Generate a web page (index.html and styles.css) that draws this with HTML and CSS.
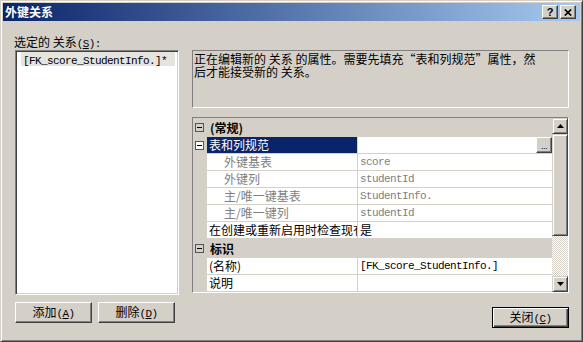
FILE: index.html
```html
<!DOCTYPE html>
<html>
<head>
<meta charset="utf-8">
<link rel="stylesheet" href="styles.css">
</head>
<body>
<div class="window">
  <div class="titlebar">
    <span class="title">外键关系</span>
    <div class="tbtns">
      <span class="tbtn help">?</span>
      <span class="tbtn close"><svg width="8" height="7" viewBox="0 0 8 7"><path d="M0.8 0.5L7.2 6.5M7.2 0.5L0.8 6.5" stroke="#000" stroke-width="1.7"/></svg></span>
    </div>
  </div>
  <div class="body">
    <div class="left">
      <div class="label">选定的 关系<span class="m">(<u>S</u>):</span></div>
      <div class="list">
        <div class="item"><span class="m">[FK_score_StudentInfo.]*</span></div>
      </div>
      <div class="btnrow">
        <button class="btn">添加<span class="m">(<u>A</u>)</span></button>
        <button class="btn">删除<span class="m">(<u>D</u>)</span></button>
      </div>
    </div>
    <div class="right">
      <div class="desc">正在编辑新的 关系 的属性。需要先填充“表和列规范”属性，然<br>后才能接受新的 关系。</div>
      <div class="grid">
        <div class="rows">
          <div class="row cat"><span class="gutter"><span class="box"></span></span><span class="cname">(常规)</span></div>
          <div class="row prop"><span class="gutter"><span class="box"></span></span><span class="name sel">表和列规范</span><span class="value"><span class="vtext"></span><span class="ell">...</span></span></div>
          <div class="row prop"><span class="gutter"></span><span class="name sub">外键基表</span><span class="value dim"><span class="m">score</span></span></div>
          <div class="row prop"><span class="gutter"></span><span class="name sub">外键列</span><span class="value dim"><span class="m">studentId</span></span></div>
          <div class="row prop"><span class="gutter"></span><span class="name sub">主/唯一键基表</span><span class="value dim"><span class="m">StudentInfo.</span></span></div>
          <div class="row prop"><span class="gutter"></span><span class="name sub">主/唯一键列</span><span class="value dim"><span class="m">studentId</span></span></div>
          <div class="row prop"><span class="gutter"></span><span class="name">在创建或重新启用时检查现有数据</span><span class="value">是</span></div>
          <div class="row cat"><span class="gutter"><span class="box"></span></span><span class="cname">标识</span></div>
          <div class="row prop"><span class="gutter"></span><span class="name">(名称)</span><span class="value"><span class="m">[FK_score_StudentInfo.]</span></span></div>
          <div class="row prop"><span class="gutter"></span><span class="name">说明</span><span class="value"></span></div>
        </div>
        <div class="vscroll">
          <div class="sbtn"><svg width="7" height="4" viewBox="0 0 7 4"><path d="M3.5 0L7 4H0z" fill="#000"/></svg></div>
          <div class="thumb"></div>
          <div class="track"></div>
          <div class="sbtn"><svg width="7" height="4" viewBox="0 0 7 4"><path d="M0 0H7L3.5 4z" fill="#000"/></svg></div>
        </div>
      </div>
      <div class="footer">
        <button class="btn default">关闭<span class="m">(<u>C</u>)</span></button>
      </div>
    </div>
  </div>
</div>
</body>
</html>
```
FILE: styles.css
```css
html, body {
  margin: 0;
  padding: 0;
  background: #d4d0c8;
}
body {
  font-family: "Noto Sans CJK SC", "DejaVu Sans", sans-serif;
  font-size: 12px;
  color: #000;
}
.m {
  font-family: "Liberation Mono", "Noto Sans CJK SC", monospace;
  font-size: 11px;
  letter-spacing: -0.6px;
}
.window {
  width: 583px;
  height: 342px;
  box-sizing: border-box;
  background: #d4d0c8;
  border: 1px solid;
  border-color: #d4d0c8 #404040 #404040 #d4d0c8;
  box-shadow: inset 1px 1px #fff, inset -1px -1px #808080;
  padding: 2px;
  display: flex;
  flex-direction: column;
}
.titlebar {
  height: 18px;
  flex: none;
  display: flex;
  align-items: center;
  padding: 0 4px 0 2px;
  background: linear-gradient(to right, #0a246a, #a6caf0);
}
.title {
  color: #fff;
  font-weight: bold;
  font-size: 12px;
  line-height: 18px;
}
.tbtns {
  margin-left: auto;
  display: flex;
  gap: 2px;
}
.tbtn {
  width: 16px;
  height: 14px;
  box-sizing: border-box;
  background: #d4d0c8;
  border: 1px solid;
  border-color: #fff #404040 #404040 #fff;
  box-shadow: inset -1px -1px #808080;
  display: flex;
  align-items: center;
  justify-content: center;
}
.tbtn.help {
  font-family: "Liberation Sans", sans-serif;
  font-weight: bold;
  font-size: 11px;
  line-height: 12px;
}
.body {
  display: flex;
  gap: 13px;
  padding: 12px 11px 0 12px;
}
.left {
  width: 164px;
  flex: none;
  display: flex;
  flex-direction: column;
}
.label {
  height: 17px;
  line-height: 17px;
  margin-left: -1px;
}
.list {
  height: 245px;
  box-sizing: border-box;
  background: #fff;
  border: 1px solid;
  border-color: #808080 #fff #fff #808080;
  box-shadow: inset 1px 1px #404040, inset -1px -1px #d4d0c8;
  padding: 1px 3px 0 5px;
}
.item {
  height: 14px;
  line-height: 14px;
  padding-left: 2px;
  background: #e6e4de;
}
.btnrow {
  display: flex;
  margin-top: 7px;
  gap: 6px;
}
.btn {
  width: 77px;
  height: 21px;
  box-sizing: border-box;
  padding: 0;
  background: #d4d0c8;
  border: 1px solid;
  border-color: #fff #404040 #404040 #fff;
  box-shadow: inset -1px -1px #808080;
  font-family: "Noto Sans CJK SC", sans-serif;
  font-size: 12px;
  color: #000;
  line-height: 17px;
}
.btn.default {
  border-color: #000;
  box-shadow: inset 1px 1px #fff, inset -1px -1px #404040, inset -2px -2px #808080;
}
.right {
  flex: 1;
  display: flex;
  flex-direction: column;
  padding-top: 17px;
}
.desc {
  height: 58px;
  box-sizing: border-box;
  border: 1px solid;
  border-color: #808080 #fff #fff #808080;
  padding: 1px 1px;
  line-height: 13px;
  font-size: 12px;
}
.grid {
  margin-top: 9px;
  height: 176px;
  box-sizing: border-box;
  border: 1px solid;
  border-color: #808080 #fff #fff #808080;
  display: flex;
}
.rows {
  flex: 1;
  display: flex;
  flex-direction: column;
}
.row {
  display: flex;
  flex: none;
}
.row.cat {
  height: 19px;
  background: #d4d0c8;
  align-items: center;
}
.row.prop {
  height: 17px;
}
.gutter {
  width: 14px;
  flex: none;
  background: #d4d0c8;
  display: flex;
  align-items: center;
}
.box {
  width: 9px;
  height: 9px;
  box-sizing: border-box;
  margin-left: 2px;
  border: 1px solid #555;
  background: linear-gradient(#000, #000) center / 5px 1px no-repeat, #fff;
}
.row.cat .box {
  background: linear-gradient(#000, #000) center / 5px 1px no-repeat, #d4d0c8;
}
.cname {
  font-weight: bold;
  padding-left: 3px;
  line-height: 19px;
}
.name {
  width: 150px;
  flex: none;
  background: #fff;
  border-right: 1px solid #d4d0c8;
  border-bottom: 1px solid #d4d0c8;
  padding-left: 2px;
  box-sizing: content-box;
  line-height: 16px;
  white-space: nowrap;
  overflow: hidden;
  width: 148px;
}
.name.sub {
  padding-left: 17px;
  width: 133px;
  color: #808080;
}
.name.sel {
  background: #0a246a;
  color: #fff;
}
.value {
  flex: 1;
  background: #fff;
  border-bottom: 1px solid #d4d0c8;
  padding-left: 2px;
  line-height: 16px;
  display: flex;
  white-space: nowrap;
  overflow: hidden;
}
.value.dim {
  color: #808080;
}
.vtext {
  flex: 1;
}
.ell {
  width: 16px;
  height: 16px;
  box-sizing: border-box;
  background: #d4d0c8;
  border: 1px solid;
  border-color: #fff #404040 #404040 #fff;
  box-shadow: inset -1px -1px #808080;
  font-family: "Liberation Sans", sans-serif;
  font-size: 9px;
  line-height: 16px;
  text-align: center;
  letter-spacing: -0.5px;
  color: #000;
}
.vscroll {
  width: 16px;
  flex: none;
  display: flex;
  flex-direction: column;
}
.sbtn, .thumb {
  box-sizing: border-box;
  background: #d4d0c8;
  border: 1px solid;
  border-color: #d4d0c8 #404040 #404040 #d4d0c8;
  box-shadow: inset 1px 1px #fff, inset -1px -1px #808080;
}
.sbtn {
  height: 16px;
  display: flex;
  align-items: center;
  justify-content: center;
}
.thumb {
  height: 102px;
}
.track {
  flex: 1;
  background: repeating-conic-gradient(#fff 0 25%, #d4d0c8 0 50%) 0 0 / 2px 2px;
}
.footer {
  display: flex;
  justify-content: flex-end;
  margin-top: 14px;
}
```
